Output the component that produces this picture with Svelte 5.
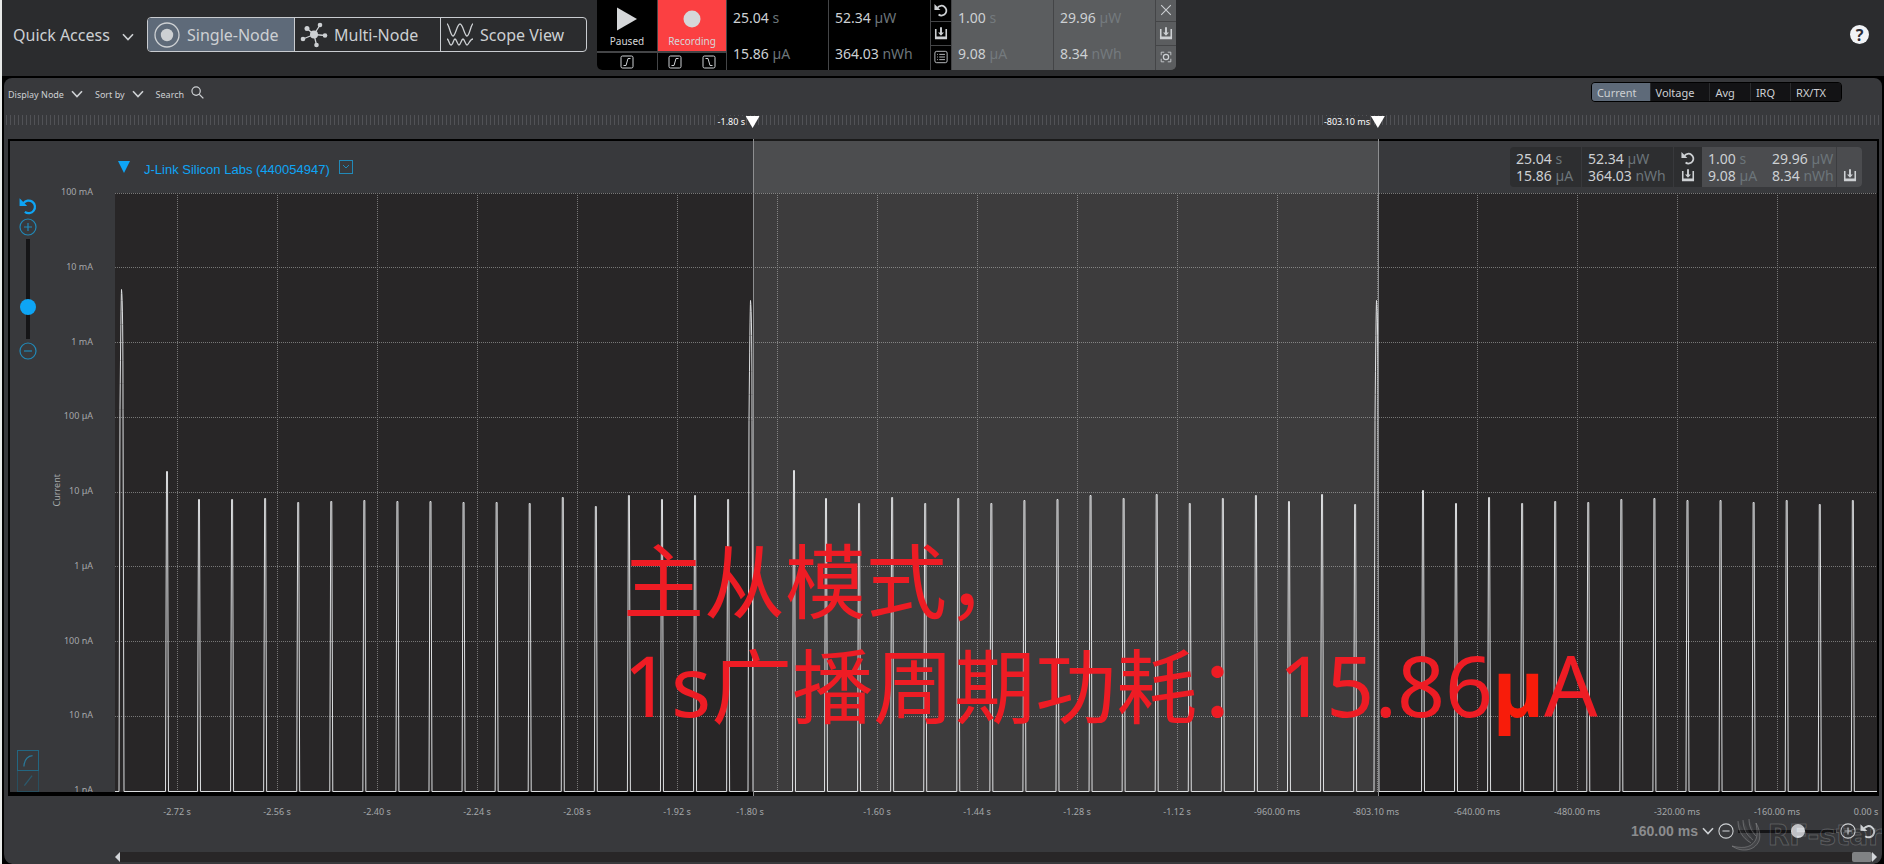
<script>
  const modes = [
    { label: 'Single-Node', icon: 'single', active: true },
    { label: 'Multi-Node', icon: 'multi', active: false },
    { label: 'Scope View', icon: 'scope', active: false }
  ];
  const tabs = ['Current', 'Voltage', 'Avg', 'IRQ', 'RX/TX'];
  const total = [
    ['25.04', 's', '15.86', 'µA'],
    ['52.34', 'µW', '364.03', 'nWh']
  ];
  const selected = [
    ['1.00', 's', '9.08', 'µA'],
    ['29.96', 'µW', '8.34', 'nWh']
  ];
  const yLabels = ['100 mA', '10 mA', '1 mA', '100 µA', '10 µA', '1 µA', '100 nA', '10 nA', '1 nA'];

  const plotWidth = 1762;
  const plotHeight = 599;
  const base = 598;
  const rows = [0, 74, 149, 224, 299, 373, 448, 523];
  const cols = Array.from({ length: 17 }, (_, i) => 62 + i * 100);

  const xLabels = [
    [62, '-2.72 s'], [162, '-2.56 s'], [262, '-2.40 s'], [362, '-2.24 s'], [462, '-2.08 s'],
    [562, '-1.92 s'], [635, '-1.80 s'], [762, '-1.60 s'], [862, '-1.44 s'], [962, '-1.28 s'],
    [1062, '-1.12 s'], [1162, '-960.00 ms'], [1261, '-803.10 ms'], [1362, '-640.00 ms'],
    [1462, '-480.00 ms'], [1562, '-320.00 ms'], [1662, '-160.00 ms'], [1751, '0.00 s']
  ];
  const cursors = [
    [638, '-1.80 s'],
    [1263, '-803.10 ms']
  ];

  // Each burst: wide transmit peak, then narrow sleep-clock pulses.
  const bursts = [
    { x: 6, top: 96, first: 52, firstTop: 278, next: 84, tops: [306, 306, 305, 309, 308, 307, 308, 308, 309, 309, 310, 304, 313, 302, 306, 302, 306] },
    { x: 635, top: 107, first: 679, firstTop: 277, next: 711, tops: [305, 310, 304, 310, 305, 310, 307, 306, 302, 305, 301, 310, 305, 302, 308, 301, 311] },
    { x: 1261, top: 107, first: 1308, firstTop: 297, next: 1341, tops: [310, 304, 310, 308, 309, 306, 305, 307, 307, 309, 307, 311, 307] }
  ];

  function pulse(x, top) {
    return ` H${x - 1} L${x} ${top} H${x + 1} L${x + 2} ${base}`;
  }
  const trace = 'M0 598' + bursts.map((b) => {
    const peak = ` H${b.x - 2} L${b.x - 1} ${b.top + 120} Q${b.x} ${b.top + 10} ${b.x + 0.5} ${b.top} Q${b.x + 2} ${b.top + 10} ${b.x + 2} ${b.top + 120} L${b.x + 3} ${base}`;
    return peak + pulse(b.first - 0.5, b.firstTop) +
      b.tops.map((t, i) => pulse(b.next - 0.5 + i * 33.07, t)).join('');
  }).join('') + ' H1762';

  const pct = (x) => (x / plotWidth) * 100;
  let range = $state('160.00 ms');
</script>

{#snippet undo()}
  <svg class="ico" viewBox="0 0 16 16"><path d="M4 5.500A5.600 5.600 0 1 1 5.200 13.200" fill="none" stroke="currentColor" stroke-width="2" /><path d="M0.500 1.200V8H7.300Z" fill="currentColor" /></svg>
{/snippet}
{#snippet save()}
  <svg class="ico" viewBox="0 0 16 16"><path d="M2 3.500V13.500H14V3.500" fill="none" stroke="currentColor" stroke-width="1.800" /><path d="M1.100 12H14.900V15H1.100Z M6.900 1.500H9.100V7.500H11.400L8 11.200L4.600 7.500H6.900Z" fill="currentColor" /></svg>
{/snippet}
{#snippet chevron()}
  <svg class="chev" viewBox="0 0 12 8"><path d="M1 1.200L6 6.600L11 1.200" fill="none" stroke="currentColor" stroke-width="1.600" /></svg>
{/snippet}
{#snippet edge(down)}
  <svg class="edge" viewBox="0 0 14 14"><rect x="1" y="1" width="12" height="12" rx="1.500" fill="none" stroke="currentColor" /><path d={down ? 'M3.500 3.500H6L8 10.500H10.500' : 'M3.500 10.500H6L8 3.500H10.500'} fill="none" stroke="currentColor" /></svg>
{/snippet}
{#snippet circle(plus)}
  <svg class="circ" viewBox="0 0 18 18"><circle cx="9" cy="9" r="8" fill="none" stroke="currentColor" stroke-width="1.200" /><path d={plus ? 'M5 9H13M9 5V13' : 'M5 9H13'} stroke="currentColor" stroke-width="1.200" /></svg>
{/snippet}
{#snippet stat(cell)}
  <div class="cell">
    <div>{cell[0]} <span class="unit">{cell[1]}</span></div>
    <div>{cell[2]} <span class="unit">{cell[3]}</span></div>
  </div>
{/snippet}

<div class="page">
  <header>
    <button class="quick">Quick Access {@render chevron()}</button>
    <nav aria-label="View mode">
      {#each modes as m}
        <button class="mode" class:active={m.active}>
          {#if m.icon === 'single'}
            <svg viewBox="0 0 28 28"><circle cx="14" cy="14" r="12" fill="none" stroke="currentColor" stroke-width="1.300" /><circle cx="14" cy="14" r="6.200" fill="currentColor" /></svg>
          {:else if m.icon === 'multi'}
            <svg viewBox="0 0 28 28"><path d="M14 13.500L7 7.500M14 13.500L20 4M14 13.500L25 14.500M14 13.500L3 18M14 13.500L16.500 24" stroke="currentColor" stroke-width="1.300" /><g fill="currentColor"><circle cx="14" cy="13.500" r="4" /><circle cx="7" cy="7.500" r="2.500" /><circle cx="20" cy="4" r="2.300" /><circle cx="25" cy="14.500" r="2.300" /><circle cx="3" cy="18" r="2.300" /><circle cx="16.500" cy="24" r="2.300" /></g></svg>
          {:else}
            <svg viewBox="0 0 28 28"><path d="M1 3C3 3 4.500 15 7 15S11 3 14 3S18.500 15 21 15S25 3 27 3M1 18C3 18 3 24 5 24S7.500 18 9 18S11.500 24 13 24S15.500 18 17 18S19.500 24 21 24S24 18 27 18" fill="none" stroke="currentColor" stroke-width="1.300" /></svg>
          {/if}
          {m.label}
        </button>
      {/each}
    </nav>

    <div class="meter">
      <div class="transport">
        <button class="big"><svg viewBox="0 0 22 24"><path d="M1 0.500L21 12L1 23.500Z" fill="currentColor" /></svg>Paused</button>
        <div class="triggers"><button aria-label="Rising trigger">{@render edge(false)}</button></div>
      </div>
      <div class="transport rec">
        <button class="big"><svg viewBox="0 0 22 24"><circle cx="11" cy="12" r="8.500" fill="currentColor" /></svg>Recording</button>
        <div class="triggers">
          <button aria-label="Start on rising edge">{@render edge(false)}</button>
          <button aria-label="Stop on falling edge">{@render edge(true)}</button>
        </div>
      </div>
      {#each total as c}{@render stat(c)}{/each}
      <div class="tools">
        <button aria-label="Reset">{@render undo()}</button>
        <button aria-label="Save">{@render save()}</button>
        <button aria-label="Log"><svg class="ico" viewBox="0 0 16 16"><rect x="1" y="1.500" width="14" height="13" rx="2" fill="none" stroke="currentColor" /><path d="M6 5H12.500M6 8H12.500M6 11H12.500M3.500 5H4.500M3.500 8H4.500M3.500 11H4.500" stroke="currentColor" /></svg></button>
      </div>
      <div class="picked">
        {#each selected as c}{@render stat(c)}{/each}
        <div class="tools">
          <button aria-label="Close"><svg class="ico" viewBox="0 0 16 16"><path d="M2.500 2.500L13.500 13.500M13.500 2.500L2.500 13.500" stroke="currentColor" stroke-width="1.200" /></svg></button>
          <button aria-label="Save selection">{@render save()}</button>
          <button aria-label="Focus selection"><svg class="ico" viewBox="0 0 16 16"><path d="M2.500 6V2.500H6M10 2.500H13.500V6M13.500 10V13.500H10M6 13.500H2.500V10" fill="none" stroke="currentColor" /><circle cx="8" cy="8" r="3" fill="none" stroke="currentColor" stroke-width="1.400" /></svg></button>
        </div>
      </div>
    </div>

    <button class="help" aria-label="Help">?</button>
  </header>

  <main>
    <div class="toolbar">
      <button>Display Node {@render chevron()}</button>
      <button>Sort by {@render chevron()}</button>
      <button class="search">Search <svg viewBox="0 0 14 14"><circle cx="5.500" cy="5.500" r="4.500" fill="none" stroke="currentColor" stroke-width="1.300" /><path d="M9 9L13.300 13.300" stroke="currentColor" stroke-width="1.400" /></svg></button>
      <div class="tabs">
        {#each tabs as t, i}<button class:active={i === 0}>{t}</button>{/each}
      </div>
    </div>

    <div class="ruler">
      <div class="ticks"></div>
      <div class="track">
        {#each cursors as c}
          <div class="cursor" style="left: {pct(c[0])}%"><span>{c[1]}</span><svg viewBox="0 0 14 12"><path d="M0 0H14L7 12Z" fill="#fff" /></svg></div>
        {/each}
      </div>
    </div>

    <div class="graph-wrap">
      <section class="graph">
        <aside>
          <div class="zoom">
            <button aria-label="Reset scale">{@render undo()}</button>
            <button aria-label="Zoom in">{@render circle(true)}</button>
            <input class="vert" type="range" value="28" aria-label="Vertical scale" />
            <button aria-label="Zoom out">{@render circle(false)}</button>
          </div>
          <div class="scale">
            <button aria-label="Logarithmic"><svg viewBox="0 0 22 22"><path d="M6.500 17C7 9 11 5.500 16 5" fill="none" stroke="currentColor" stroke-width="1.400" /></svg></button>
            <button class="dim" aria-label="Linear"><svg viewBox="0 0 22 22"><path d="M7 16L15.500 5" fill="none" stroke="currentColor" stroke-width="1.400" /></svg></button>
          </div>
        </aside>
        <div class="axis-name"><span>Current</span></div>
        <div class="y-axis">
          {#each yLabels as y}<span>{y}</span>{/each}
        </div>
        <div class="main-col">
          <div class="title-row">
            <svg class="tri" viewBox="0 0 12 12"><path d="M0 0H12L6 12Z" fill="#0ea5f5" /></svg>
            <h2>J-Link Silicon Labs (440054947)</h2>
            <button class="expand" aria-label="Device options"><svg viewBox="0 0 14 14"><rect x="0.500" y="0.500" width="13" height="13" fill="none" stroke="currentColor" /><path d="M4 5L7 8L10 5" fill="none" stroke="currentColor" /></svg></button>
            <div class="summary">
              {#each total as c}{@render stat(c)}{/each}
              <div class="pair"><button aria-label="Reset totals">{@render undo()}</button><button aria-label="Save totals">{@render save()}</button></div>
              <div class="picked">
                {#each selected as c}{@render stat(c)}{/each}
                <div class="pair"><button aria-label="Save range">{@render save()}</button></div>
              </div>
            </div>
          </div>
          <div class="plot">
            <svg viewBox="0 0 {plotWidth} {plotHeight}" preserveAspectRatio="none">
              <g class="grid">
                {#each rows as y}<line x1="0" x2={plotWidth} y1={y + 0.5} y2={y + 0.5} />{/each}
                {#each cols as x}<line x1={x + 0.5} x2={x + 0.5} y1="0" y2={plotHeight} />{/each}
              </g>
              <path class="trace" transform="translate(0 0.5)" d={trace} />
            </svg>
          </div>
        </div>
      </section>
      <div class="over">
        <div class="selection" style="left: {pct(638)}%; width: {pct(626)}%"></div>
        <p class="note">主从模式，<br /><span class="latin">1s</span>广播周期功耗：<span class="latin">15.86</span><b>µ</b><span class="latin">A</span></p>
      </div>
    </div>

    <div class="x-axis">
      {#each xLabels as l}<span style="left: {pct(l[0])}%">{l[1]}</span>{/each}
    </div>

    <div class="range-row">
      <label>
        <select bind:value={range} aria-label="Time per division"><option>160.00 ms</option></select>
        {@render chevron()}
      </label>
      <button aria-label="Zoom out time">{@render circle(false)}</button>
      <input class="horiz" type="range" value="63" aria-label="Horizontal scale" />
      <button aria-label="Zoom in time">{@render circle(true)}</button>
      <button aria-label="Reset time">{@render undo()}</button>
      <div class="brand">
        <svg viewBox="0 0 36 36"><path d="M0 28C8 34 22 34 27 23C29 17 27 10 24 5C25 12 26 18 23 23C18 31 8 30 0 28ZM6 3C6 12 10 20 19 25M11 2C11 10 14 17 21 22M17 1C17 8 19 13 24 18" /></svg>
        <span>RF-star</span>
      </div>
    </div>

    <div class="scroller">
      <button class="left" aria-label="Scroll left"></button>
      <div class="rail"><div class="grip"></div></div>
      <button class="right" aria-label="Scroll right"></button>
    </div>
  </main>
</div>

<style>
  :global(body) { background: #000; }
  * { box-sizing: border-box; }
  .page {
    min-height: 100vh; display: flex; flex-direction: column; overflow: hidden;
    border-left: 2px solid #e9ebe9; background: #000; color: #cdd0d3;
    font-family: "Noto Sans", "Noto Sans CJK SC", sans-serif; font-size: 14px;
  }
  svg { display: block; flex: none; }
  button {
    display: flex; align-items: center; justify-content: center; padding: 0; border: 0;
    background: none; color: inherit; font: inherit;
  }
  .ico { width: 14px; height: 14px; }
  .chev { width: 12px; height: 8px; }
  .circ { width: 18px; height: 18px; }
  .edge { width: 14px; height: 14px; }
  .unit { color: #6c757a; }

  header { height: 76px; flex: none; display: flex; align-items: flex-start; background: #2b2c2e; }
  .quick { height: 34px; margin: 18px 11px 0 11px; font-size: 16px; width: 121px; justify-content: space-between; white-space: nowrap; }
  .quick .chev { margin-top: 4px; }
  nav { display: flex; margin: 17px 0 0 2px; height: 35px; border: 1px solid #c9ccd0; border-radius: 4px; overflow: hidden; }
  .mode { width: 146px; padding: 0 5px; gap: 6px; justify-content: flex-start; font-size: 16px; white-space: nowrap; }
  .mode + .mode { border-left: 1px solid #c9ccd0; }
  .mode.active { background: #5e6a79; }
  .mode svg { width: 28px; height: 28px; }

  .meter {
    display: flex; gap: 1px; height: 70px; margin-left: 10px; background: #444547;
    border-radius: 0 0 5px 5px; overflow: hidden;
  }
  .transport { display: flex; flex-direction: column; gap: 2px; width: 60px; }
  .transport.rec { width: 68px; }
  .big { height: 51px; flex-direction: column; justify-content: flex-end; gap: 2px; padding-bottom: 2px; background: #000; font-size: 10px; line-height: 16px; color: #d5d7d9; }
  .big svg { width: 22px; height: 24px; }
  .rec .big { background: #fb4042; }
  .triggers { flex: 1; display: flex; align-items: center; justify-content: center; gap: 20px; background: #000; }
  .meter .cell { width: 101px; padding: 8px 0 6px 6px; display: flex; flex-direction: column; justify-content: space-between; line-height: 20px; background: #000; white-space: nowrap; }
  .tools { width: 20px; display: grid; grid-template-rows: 21px 23px 24px; gap: 1px; }
  .tools button { background: #000; padding-bottom: 2px; }
  .meter .picked { display: flex; gap: 1px; }
  .meter .picked .cell { background: #5b5d5f; }
  .meter .picked .tools button { background: #5b5d5f; }
  .meter .picked .unit { color: #747a7e; }
  .help { width: 19px; height: 19px; margin: 25px 15px 0 auto; border-radius: 50%; background: #f1f3f6; color: #2b2c36; font-weight: 700; font-size: 16px; }

  main {
    flex: 1; display: flex; flex-direction: column; overflow: hidden;
    border: 2px solid #000; border-bottom: 0; border-radius: 10px; background: #38393c;
  }
  .toolbar { display: flex; align-items: center; gap: 12px; height: 30px; padding: 0 40px 2px 4px; font-size: 9px; }
  .toolbar button { gap: 7px; white-space: nowrap; }
  .toolbar > button { padding-top: 4px; }
  .search svg { width: 13px; height: 13px; margin-bottom: 3px; }
  .tabs { display: flex; margin-left: auto; gap: 1px; border: 1px solid #000; border-radius: 4px; overflow: hidden; background: #2a2b2d; font-size: 11px; }
  .tabs button { height: 18px; padding: 0 15px 0 5px; background: #131315; }
  .tabs button:first-child { padding-right: 13px; }
  .tabs button.active { background: #5e6a79; }

  .ruler { position: relative; height: 31px; padding: 7px 3px 0 2px; font-size: 9px; color: #fff; }
  .ticks { height: 10px; background: repeating-linear-gradient(90deg, #515256 0 1px, transparent 1px 4px); }
  .track { position: absolute; top: 8px; left: 111px; right: 5px; }
  .cursor { position: absolute; display: flex; align-items: center; gap: 1px; height: 12px; transform: translateX(calc(-100% + 7px)); white-space: nowrap; }
  .cursor span { background: #38393c; line-height: 12px; }
  .cursor svg { width: 14px; height: 12px; }

  .graph-wrap { position: relative; flex: 1; display: flex; margin: 0 3px 0 4px; }
  .graph { flex: 1; display: flex; min-width: 0; border: 2px solid #000; border-bottom-width: 4px; overflow: hidden; }
  aside { width: 36px; display: flex; flex-direction: column; justify-content: space-between; align-items: center; color: #0ea5f5; padding-top: 56px; }
  .zoom { display: flex; flex-direction: column; align-items: center; gap: 3px; }
  .zoom .ico { width: 18px; height: 18px; }
  .zoom .circ { color: #2189b8; }
  input[type='range'] { appearance: none; margin: 0; background: none; }
  .vert { width: 16px; height: 100px; writing-mode: vertical-lr; direction: rtl; }
  .vert::-webkit-slider-runnable-track { width: 4px; background: #151517; }
  .vert::-webkit-slider-thumb { appearance: none; width: 16px; height: 16px; margin-left: -6px; border-radius: 50%; background: #0ea5f5; }
  .scale { color: #2a7898; }
  .scale button { border: 1px solid #236681; width: 22px; height: 21px; }
  .scale button.dim { color: #2b5a6d; border-color: #294f5f; border-top: 0; }
  .scale svg { width: 20px; height: 20px; }
  .axis-name { width: 20px; display: flex; align-items: center; justify-content: center; font-size: 9px; color: #a5a8aa; padding-top: 48px; }
  .axis-name span { writing-mode: vertical-rl; transform: rotate(180deg); }
  .y-axis { width: 49px; padding: 45px 22px 0 0; margin-bottom: -4px; display: flex; flex-direction: column; justify-content: space-between; align-items: flex-end; font-size: 9px; line-height: 12px; color: #a5a8aa; white-space: nowrap; }
  .main-col { flex: 1; min-width: 0; display: flex; flex-direction: column; }
  .title-row { height: 52px; display: flex; align-items: flex-start; padding: 6px 15px 0 3px; }
  .tri { width: 12px; height: 12px; margin-top: 14px; }
  h2 { margin: 15px 9px 0 14px; font: 400 13px/16px "Liberation Sans", sans-serif; color: #0ea5f5; white-space: nowrap; }
  .expand { margin-top: 13px; color: #2189b8; }
  .expand svg { width: 14px; height: 14px; }
  .summary { display: flex; margin-left: auto; height: 40px; border-radius: 4px; overflow: hidden; background: #2d2e30; line-height: 17px; white-space: nowrap; }
  .summary .cell { padding: 3px 0 0 6px; width: 72px; border-right: 1px solid #38393c; }
  .summary .cell + .cell { width: 92px; }
  .pair { width: 28px; display: flex; flex-direction: column; justify-content: flex-end; align-items: center; gap: 3px; padding-bottom: 5px; }
  .summary .picked { display: flex; background: #4b4c4f; }
  .summary .picked .cell { width: 64px; border: 0; }
  .summary .picked .cell + .cell { width: 71px; border-right: 1px solid #3c3d40; }
  .summary .picked .pair { width: 25px; }
  .plot { flex: 1; min-height: 0; position: relative; background: #282627; }
  .plot svg { position: absolute; width: 100%; height: 100%; }
  .grid line { stroke: #777; stroke-width: 1; stroke-dasharray: 1 1; vector-effect: non-scaling-stroke; }
  .trace { fill: none; stroke: #dcdee0; stroke-width: 1; vector-effect: non-scaling-stroke; }

  .over { position: absolute; inset: 0 2px 0 107px; pointer-events: none; }
  .selection { position: absolute; top: 0; bottom: 0; background: #ffffff1a; border: solid #8d8e90; border-width: 0 1px; }
  .note {
    position: absolute; left: 508px; bottom: 62px; margin: 0; color: #ee1c24; white-space: nowrap;
    font: 400 81px/105px "Noto Sans CJK SC", sans-serif;
  }
  .latin { font: 400 84px/80px "Noto Sans", sans-serif; }
  .note b { font: 700 78px/80px "Noto Sans", sans-serif; color: #f81c0a; }

  .x-axis { position: relative; height: 24px; margin: 0 5px 0 111px; font-size: 9px; line-height: 12px; color: #a5a8aa; }
  .x-axis span { position: absolute; top: 10px; transform: translateX(-50%); white-space: nowrap; }
  .range-row { position: relative; height: 22px; display: flex; justify-content: flex-end; align-items: center; gap: 4px; padding-right: 6px; }
  .range-row label { display: flex; align-items: center; gap: 4px; }
  .range-row .circ { width: 16px; height: 16px; }
  .range-row .ico { width: 16px; height: 16px; }
  select { appearance: none; border: 0; padding: 0; background: none; color: #8b8c8e; font: 700 14px/20px "Liberation Sans", sans-serif; }
  .horiz { width: 98px; height: 16px; }
  .horiz::-webkit-slider-runnable-track { height: 3px; background: #151517; }
  .horiz::-webkit-slider-thumb { appearance: none; width: 14px; height: 14px; margin-top: -6px; border-radius: 50%; background: #d3d6da; }
  .brand { position: absolute; right: 0; top: -2px; display: flex; align-items: center; pointer-events: none; }
  .brand svg { width: 36px; height: 36px; fill: #ffffff10; stroke: #ffffff38; stroke-width: 1; }
  .brand span { font: 700 28px/36px "DejaVu Sans", sans-serif; color: #00000018; -webkit-text-stroke: 1px #ffffff30; }

  .scroller { height: 22px; display: flex; align-items: flex-start; padding: 10px 5px 2px 111px; }
  .scroller button { width: 5px; height: 10px; background: #d3d6da; }
  .left { clip-path: polygon(100% 0, 100% 100%, 0 50%); }
  .right { clip-path: polygon(0 0, 0 100%, 100% 50%); }
  .rail { flex: 1; height: 10px; background: #282627; display: flex; justify-content: flex-end; }
  .grip { width: 20px; background: #808284; border-radius: 2px; }
</style>
